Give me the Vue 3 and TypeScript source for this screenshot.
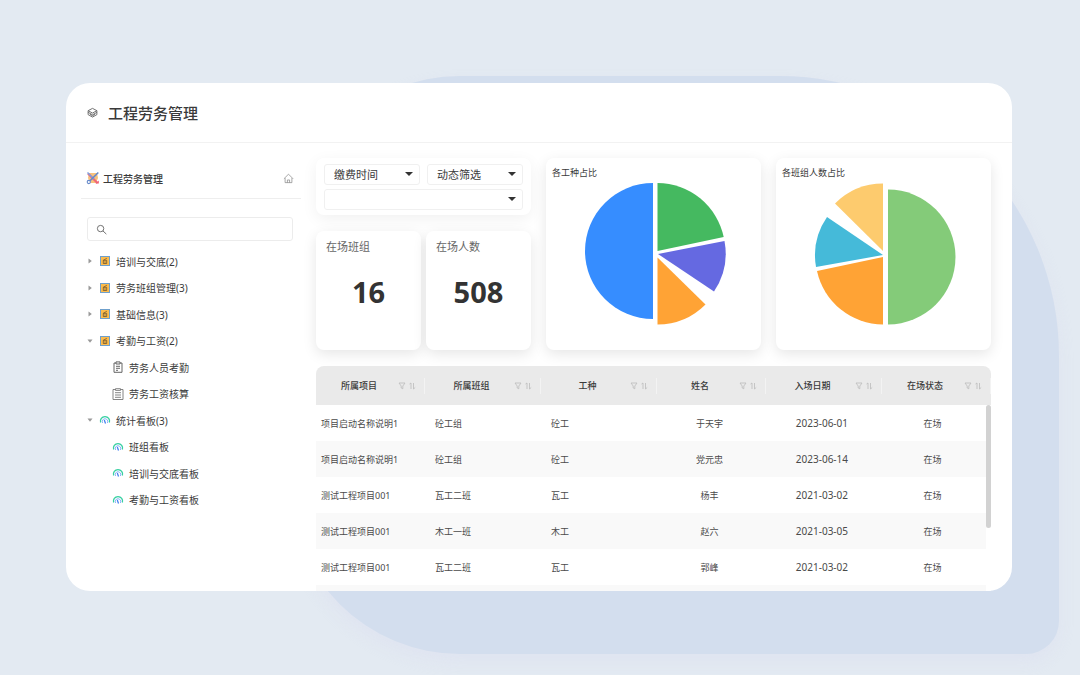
<script setup lang="ts">
import { ref } from 'vue'

interface TreeNode {
  label: string
  icon: 'folder' | 'clip' | 'list' | 'gauge'
  level: number
  open?: boolean
}

interface Worker {
  project: string
  team: string
  trade: string
  name: string
  date: string
  status: string
}

interface Slice {
  d: string
  color: string
}

const nodes: TreeNode[] = [
  { label: '培训与交底(2)', icon: 'folder', level: 0, open: false },
  { label: '劳务班组管理(3)', icon: 'folder', level: 0, open: false },
  { label: '基础信息(3)', icon: 'folder', level: 0, open: false },
  { label: '考勤与工资(2)', icon: 'folder', level: 0, open: true },
  { label: '劳务人员考勤', icon: 'clip', level: 1 },
  { label: '劳务工资核算', icon: 'list', level: 1 },
  { label: '统计看板(3)', icon: 'gauge', level: 0, open: true },
  { label: '班组看板', icon: 'gauge', level: 1 },
  { label: '培训与交底看板', icon: 'gauge', level: 1 },
  { label: '考勤与工资看板', icon: 'gauge', level: 1 },
]

const stats = [
  { label: '在场班组', value: 16 },
  { label: '在场人数', value: 508 },
]

const charts: { title: string; slices: Slice[] }[] = [
  {
    title: '各工种占比',
    slices: [
      { color: '#368dff', d: 'M107 3A68 68 0 0 0 107 139Z' },
      { color: '#45b960', d: 'M111.500 3A68 68 0 0 1 177.700 57L111.500 71Z' },
      { color: '#6569e1', d: 'M178.500 61A68 68 0 0 1 168 111.500L112 74Z' },
      { color: '#ffa335', d: 'M111.500 77.500L159.500 124.500A68 68 0 0 1 111.500 144.500Z' },
    ],
  },
  {
    title: '各班组人数占比',
    slices: [
      { color: '#84cb79', d: 'M112 9.500A67.500 67.500 0 0 1 112 144.500Z' },
      { color: '#ffa335', d: 'M107 77L41 91A68 68 0 0 0 107 144.500Z' },
      { color: '#45bad9', d: 'M107 75L51 37A68 68 0 0 0 40 87Z' },
      { color: '#fdcb6e', d: 'M107 71L59 23.500A68 68 0 0 1 107 3.500Z' },
    ],
  },
]

const columns = ['所属项目', '所属班组', '工种', '姓名', '入场日期', '在场状态']

const workers: Worker[] = [
  { project: '项目启动名称说明1', team: '砼工组', trade: '砼工', name: '于天宇', date: '2023-06-01', status: '在场' },
  { project: '项目启动名称说明1', team: '砼工组', trade: '砼工', name: '党元忠', date: '2023-06-14', status: '在场' },
  { project: '测试工程项目001', team: '瓦工二班', trade: '瓦工', name: '杨丰', date: '2021-03-02', status: '在场' },
  { project: '测试工程项目001', team: '木工一班', trade: '木工', name: '赵六', date: '2021-03-05', status: '在场' },
  { project: '测试工程项目001', team: '瓦工二班', trade: '瓦工', name: '郭峰', date: '2021-03-02', status: '在场' },
  { project: '', team: '', trade: '', name: '', date: '', status: '' },
]

const keyword = ref('')
</script>

<template>
  <div class="page">
    <div class="blob" aria-hidden="true"></div>
    <div class="window">
      <header class="topbar">
        <svg class="logo" viewBox="0 0 12 12" aria-hidden="true">
          <path d="M6 1.500L10.800 4L6 6.600L1.200 4Z" />
          <path d="M1.200 4V8.300L6 11L10.800 8.300V4" />
          <path d="M1.200 5.800L6 8.500L10.800 5.800" />
          <path d="M3.300 8L6 9.500L8.700 8" />
        </svg>
        <h1>工程劳务管理</h1>
      </header>

      <div class="body">
        <aside class="sidebar">
          <div class="side-head">
            <svg class="tools" viewBox="0 0 14 14" aria-hidden="true">
              <path d="M3 2H11L12 7L10 12H4L2 7Z" fill="#f8c27c" />
              <path d="M2 2.500L11.500 12" stroke="#ef6a78" stroke-width="2.200" />
              <path d="M1.500 1.500L8 8" stroke="#7f9fe0" stroke-width="1.500" />
              <path d="M12.300 1.500L4 9.800" stroke="#6689c9" stroke-width="1.600" />
              <circle cx="2.800" cy="11" r="1.600" fill="#fff" stroke="#6689c9" stroke-width="1.100" />
              <path d="M9.500 12.500H12.800V9.500Z" fill="#ef5f73" />
            </svg>
            <h2>工程劳务管理</h2>
            <button class="home" type="button" aria-label="首页">
              <svg viewBox="0 0 12 12" aria-hidden="true">
                <path d="M1 6.300L6 1.300L11 6.300M2.300 5.500V10.500H9.700V5.500M4.800 10.500V7.600H7.200V10.500" />
              </svg>
            </button>
          </div>

          <label class="search">
            <svg viewBox="0 0 12 12" aria-hidden="true">
              <circle cx="5" cy="5" r="3.500" />
              <path d="M7.500 7.500L11.300 11" />
            </svg>
            <input v-model="keyword" type="text" aria-label="搜索" />
          </label>

          <nav class="tree">
            <a v-for="node in nodes" :key="node.label" href="#" class="node" :class="{ child: node.level === 1 }">
              <svg v-if="node.level === 0" class="caret" :class="{ open: node.open }" viewBox="0 0 6 6" aria-hidden="true">
                <path d="M1.500 0.500L4.800 3L1.500 5.500Z" />
              </svg>
              <svg v-if="node.icon === 'folder'" class="icon" viewBox="0 0 12 12" fill="none" aria-hidden="true">
                <rect x="1.500" y="1.500" width="9" height="9" fill="#fdbb4b" stroke="#6fa0cc" />
                <path d="M4.300 5.300V8.500H7.700V5.300M4.300 5.300L7.800 3.300M4.300 5.300H7.700M5.300 7H6.800" stroke="#6b5630" stroke-width="0.800" />
              </svg>
              <svg v-else-if="node.icon === 'clip'" class="icon" viewBox="0 0 12 12" fill="none" stroke="#555" stroke-width="0.900" aria-hidden="true">
                <path d="M4 2H2V11.300H10V2H8M4 0.900H8V3H4ZM4 5.300H8M4 7.300H8M4 9.300H6" />
              </svg>
              <svg v-else-if="node.icon === 'list'" class="icon" viewBox="0 0 12 12" fill="none" stroke="#777" stroke-width="0.900" aria-hidden="true">
                <path d="M3.500 1.500H1V11.500H11V1.500H8.500M3.500 0.700H8.500V2.400H3.500ZM3 4.700H9M3 7H9M3 9.300H9" />
              </svg>
              <svg v-else class="icon" viewBox="0 0 12 12" fill="none" aria-hidden="true">
                <path d="M1.600 8.500A4.600 4.600 0 1 1 10.400 8.500" stroke="#35cfa0" stroke-width="1.300" />
                <path d="M3.600 9A2.800 2.800 0 1 1 8.400 9" stroke="#8cb4fa" stroke-width="1" />
                <path d="M5.300 6L6.500 9.500" stroke="#3f7df0" stroke-width="1.200" />
              </svg>
              <span>{{ node.label }}</span>
            </a>
          </nav>
        </aside>

        <main class="main">
          <section class="overview">
            <div class="left">
              <div class="card filters">
                <div class="pick">
                  <select aria-label="缴费时间"><option>缴费时间</option></select>
                </div>
                <div class="pick">
                  <select aria-label="动态筛选"><option>动态筛选</option></select>
                </div>
                <div class="pick wide">
                  <select aria-label="筛选条件"><option></option></select>
                </div>
              </div>
              <div class="stats">
                <div v-for="stat in stats" :key="stat.label" class="card stat">
                  <span class="stat-label">{{ stat.label }}</span>
                  <strong>{{ stat.value }}</strong>
                </div>
              </div>
            </div>
            <div v-for="chart in charts" :key="chart.title" class="card chart">
              <h3>{{ chart.title }}</h3>
              <svg viewBox="0 0 215 148" role="img" :aria-label="chart.title">
                <path v-for="slice in chart.slices" :key="slice.color" :d="slice.d" :fill="slice.color" />
              </svg>
            </div>
          </section>

          <section class="table-box">
            <table>
              <colgroup>
                <col class="c-narrow" /><col class="c-wide" /><col class="c-wide" />
                <col class="c-narrow" /><col class="c-wide" /><col class="c-narrow" />
              </colgroup>
              <thead>
                <tr>
                  <th v-for="column in columns" :key="column" scope="col">
                    <div class="th">
                      <span>{{ column }}</span>
                      <svg viewBox="0 0 18 8" aria-hidden="true">
                        <path d="M1 1H7L4.800 4V6.800L3.200 6V4Z" />
                        <path d="M11.500 2L13 1V7M15.500 1V7L17.200 5.500" />
                      </svg>
                    </div>
                  </th>
                </tr>
              </thead>
              <tbody>
                <tr v-for="(worker, index) in workers" :key="index">
                  <td>{{ worker.project }}</td>
                  <td class="second">{{ worker.team }}</td>
                  <td class="second">{{ worker.trade }}</td>
                  <td class="mid">{{ worker.name }}</td>
                  <td class="mid date">{{ worker.date }}</td>
                  <td class="mid last">{{ worker.status }}</td>
                </tr>
              </tbody>
            </table>
            <div class="track" aria-hidden="true"><div class="thumb"></div></div>
          </section>
        </main>
      </div>
    </div>
  </div>
</template>

<style>
body {
  margin: 0;
  background: #e3eaf2;
}
</style>

<style scoped>
* {
  box-sizing: border-box;
}

.page {
  position: relative;
  display: flex;
  height: 100vh;
  padding: 83px 68px 84px 66px;
  overflow: hidden;
  background: #e3eaf2;
  color: #3a3a3a;
  font-family: "Noto Sans", "Noto Sans CJK SC", sans-serif;
  font-size: 10px;
}

.blob {
  position: absolute;
  inset: 76px 21px 21px 290px;
  border-radius: 170px 280px 33px 170px;
  background: #d3deee;
  box-shadow: 0 8px 16px rgba(214, 214, 240, 0.3);
}

.window {
  position: relative;
  display: flex;
  flex: 1;
  flex-direction: column;
  min-width: 0;
  overflow: hidden;
  border-radius: 24px;
  background: #fff;
}

.topbar {
  display: flex;
  flex: none;
  align-items: center;
  gap: 10px;
  height: 60px;
  padding: 0 21px;
  border-bottom: 1px solid #f2f2f2;
}

.logo {
  width: 11px;
  height: 11px;
  fill: none;
  stroke: #666;
  stroke-width: 1;
}

h1,
h2,
h3 {
  margin: 0;
  font-weight: 500;
}

h1 {
  font-size: 15px;
  line-height: 20px;
}

.body {
  display: flex;
  flex: 1;
  gap: 15px;
  min-height: 0;
  padding: 15px 21px 0 15px;
}

.sidebar {
  flex: none;
  width: 220px;
}

.side-head {
  display: flex;
  align-items: center;
  height: 41px;
  padding: 0 7px 0 5px;
  border-bottom: 1px solid #eee;
}

.tools {
  width: 14px;
  height: 14px;
}

h2 {
  flex: 1;
  margin-left: 3px;
  font-size: 10px;
}

.home {
  display: flex;
  padding: 0;
  border: 0;
  background: none;
}

.home svg {
  width: 11px;
  height: 11px;
  fill: none;
  stroke: #888;
  stroke-width: 0.8;
}

.search {
  display: flex;
  align-items: center;
  height: 24px;
  margin: 18px 8px 7px 6px;
  padding: 0 8px;
  border: 1px solid #ececec;
  border-radius: 3px;
}

.search svg {
  flex: none;
  width: 11px;
  height: 11px;
  fill: none;
  stroke: #666;
  stroke-width: 1;
}

.search input {
  flex: 1;
  min-width: 0;
  padding: 0 6px;
  border: 0;
  outline: 0;
  background: none;
  font: inherit;
}

.tree {
  display: grid;
  grid-auto-rows: 1fr;
  height: 265px;
}

.node {
  display: flex;
  align-items: center;
  padding-left: 6px;
  color: #3a3a3a;
  text-decoration: none;
}

.child {
  padding-left: 31px;
}

.caret {
  width: 6px;
  height: 6px;
  margin-right: 6px;
  fill: #999;
}

.caret.open {
  transform: rotate(90deg);
}

.icon {
  width: 12px;
  height: 12px;
  margin-right: 5px;
}

.main {
  display: flex;
  flex: 1;
  flex-direction: column;
  gap: 16px;
  min-width: 0;
}

.overview {
  display: grid;
  flex: none;
  grid-template-columns: repeat(3, 1fr);
  gap: 15px;
}

.card {
  border-radius: 8px;
  background: #fff;
  box-shadow: 0 4px 14px rgba(0, 0, 0, 0.1);
}

.left {
  display: flex;
  flex-direction: column;
  gap: 16px;
}

.filters {
  display: grid;
  grid-template-columns: 1fr 1fr;
  gap: 4px 7px;
  padding: 6px 8px 5px;
  box-shadow: 0 4px 16px rgba(0, 0, 0, 0.06);
}

.pick {
  position: relative;
}

.pick::after {
  position: absolute;
  top: 8px;
  right: 7px;
  border: 4px solid transparent;
  border-top-color: #333;
  border-bottom: 0;
  content: "";
  pointer-events: none;
}

.wide {
  grid-column: span 2;
}

select {
  display: block;
  width: 100%;
  height: 21px;
  padding: 0 9px;
  border: 1px solid #f0f0f0;
  border-radius: 3px;
  appearance: none;
  background: #fff;
  color: #3a3a3a;
  font-family: inherit;
  font-size: 11px;
}

.stats {
  display: grid;
  flex: 1;
  grid-template-columns: 1fr 1fr;
  gap: 5px;
}

.stat {
  display: flex;
  flex-direction: column;
  height: 119px;
  padding: 8px 10px;
}

.stat-label {
  color: #666;
  font-size: 11px;
  line-height: 15px;
}

.stat strong {
  margin-top: 18px;
  color: #333;
  font-size: 29px;
  line-height: 40px;
  text-align: center;
}

.chart {
  height: 192px;
  padding-top: 7px;
}

h3 {
  margin-left: 6px;
  font-size: 9px;
  font-weight: 400;
  line-height: 15px;
}

.chart svg {
  display: block;
  width: 100%;
}

.table-box {
  position: relative;
  flex: 1;
  min-height: 0;
  overflow: hidden;
  border-radius: 8px 8px 0 0;
}

table {
  width: 100%;
  border-collapse: collapse;
  table-layout: fixed;
  font-size: 9px;
}

.c-narrow {
  width: 16%;
}

.c-wide {
  width: 17%;
}

th {
  height: 39px;
  padding: 0;
  background: #eaeaea;
  font-weight: 500;
}

.th {
  display: grid;
  grid-template-columns: 1fr 18px;
  align-items: center;
  height: 16px;
  padding: 0 8px 0 4px;
  border-right: 1px solid #f3f3f3;
}

.th svg {
  width: 18px;
  fill: none;
  stroke: #bbb;
  stroke-width: 0.8;
}

td {
  height: 36px;
  padding: 0 0 0 5px;
  color: #4a4a4a;
  white-space: nowrap;
}

tbody tr:nth-child(even) {
  background: #f9f9f9;
}

.second {
  padding-left: 10px;
}

.mid {
  padding: 0 4px 0 0;
  text-align: center;
}

.last {
  padding-right: 8px;
}

.date {
  font-size: 10px;
}

.track {
  position: absolute;
  top: 39px;
  right: 0;
  bottom: 0;
  width: 5px;
  background: #fff;
}

.thumb {
  height: 123px;
  border-radius: 3px;
  background: #d2d2d2;
}
</style>
